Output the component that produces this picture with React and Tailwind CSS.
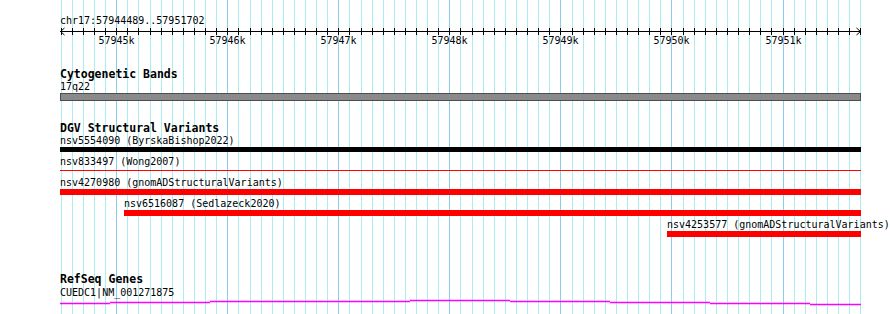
import React from "react";

const START = 57944489;
const END = 57951702;
const LEFT = 60;
const WIDTH = 801;
const scale = WIDTH / (END - START);
const toX = (bp) => (Math.min(Math.max(bp, START), END) - START) * scale;
const lineX = (bp) => Math.floor(LEFT + toX(bp)) + 0.5 - LEFT;

const ticks = [];
for (let bp = 57944500; bp <= END; bp += 100) ticks.push(bp);

const features = [
  { name: "nsv5554090 (ByrskaBishop2022)", start: START, end: END, kind: "black" },
  { name: "nsv833497 (Wong2007)", start: START, end: END, kind: "thin" },
  { name: "nsv4270980 (gnomADStructuralVariants)", start: START, end: END, kind: "red" },
  { name: "nsv6516087 (Sedlazeck2020)", start: 57945065, end: END, kind: "red" },
  { name: "nsv4253577 (gnomADStructuralVariants)", start: 57949955, end: END, kind: "red" },
];

// exon-ish steps of the gene line: [x1, x2, y] relative to the track
const geneSteps = [
  [0, 50, 4],
  [50, 150, 3],
  [150, 350, 2],
  [350, 450, 1],
  [450, 550, 2],
  [550, 650, 3],
  [650, 750, 4],
  [750, 801, 5],
];

const GridLines = () => (
  <svg className="absolute inset-0" width="890" height="314">
    {ticks.map((bp) => {
      const x = lineX(bp) + LEFT;
      const major = bp % 1000 === 0;
      return (
        <line
          key={bp}
          x1={x}
          x2={x}
          y1="0"
          y2="314"
          stroke={major ? "#8ccdee" : "#aaecef"}
          strokeWidth="1"
        />
      );
    })}
  </svg>
);

const Ruler = () => (
  <svg width="801" height="22" className="block overflow-visible text-[10px]">
    <line x1="0" x2="801" y1="4.5" y2="4.5" stroke="#000" />
    <polyline points="4.5,1 0.5,4.5 4.5,8" fill="none" stroke="#000" />
    <polyline points="796.5,1 800.5,4.5 796.5,8" fill="none" stroke="#000" />
    {ticks.map((bp) => {
      const x = lineX(bp);
      return <line key={bp} x1={x} x2={x} y1="1" y2="8" stroke="#000" />;
    })}
    {ticks
      .filter((bp) => bp % 1000 === 0)
      .map((bp) => (
        <text key={bp} x={lineX(bp)} y="17" textAnchor="middle" fill="#000">
          {bp / 1000}k
        </text>
      ))}
  </svg>
);

const TrackLabel = ({ children, className = "" }) => (
  <div className={`h-[12px] text-[11.5px] leading-[12px] font-bold ${className}`}>
    {children}
  </div>
);

const FeatureRow = ({ f }) => {
  const left = toX(f.start);
  const width = toX(f.end) - left;
  return (
    <div className="h-[21px]">
      <div className="h-[12px] leading-[12px] whitespace-nowrap" style={{ marginLeft: left }}>
        {f.name}
      </div>
      <div className="h-[6px]" style={{ marginLeft: left, width }}>
        {f.kind === "black" && <div className="h-[5px] bg-black" />}
        {f.kind === "red" && <div className="h-[6px] bg-[#ff0000]" />}
        {f.kind === "thin" && <div className="mt-[2px] h-[1px] bg-[#ff0000]" />}
      </div>
    </div>
  );
};

export default function App() {
  return (
    <div className="relative w-[890px] h-[314px] overflow-hidden bg-white text-black font-['DejaVu_Sans_Mono',monospace] text-[10px]">
      <GridLines />
      <div className="relative pl-[60px] pt-[15px]">
        <div className="h-[12px] leading-[12px]">chr17:57944489..57951702</div>
        <Ruler />

        <TrackLabel className="mt-[19px]">Cytogenetic Bands</TrackLabel>
        <div className="mt-[1px] h-[12px] leading-[12px]">17q22</div>
        <div className="h-[8px] w-[801px] border border-[#4d4d4d] bg-[#8a8a8a]" />

        <TrackLabel className="mt-[21px]">DGV Structural Variants</TrackLabel>
        <div className="mt-[1px]">
          {features.map((f) => (
            <FeatureRow key={f.name} f={f} />
          ))}
        </div>

        <TrackLabel className="mt-[33px]">RefSeq Genes</TrackLabel>
        <div className="mt-[2px] h-[12px] leading-[12px]">CUEDC1|NM_001271875</div>
        <svg width="801" height="8" className="block">
          {geneSteps.map(([x1, x2, y]) => (
            <line key={x1} x1={x1} x2={x2} y1={y + 0.5} y2={y + 0.5} stroke="#ff00ff" strokeWidth="1.4" />
          ))}
        </svg>
      </div>
    </div>
  );
}
